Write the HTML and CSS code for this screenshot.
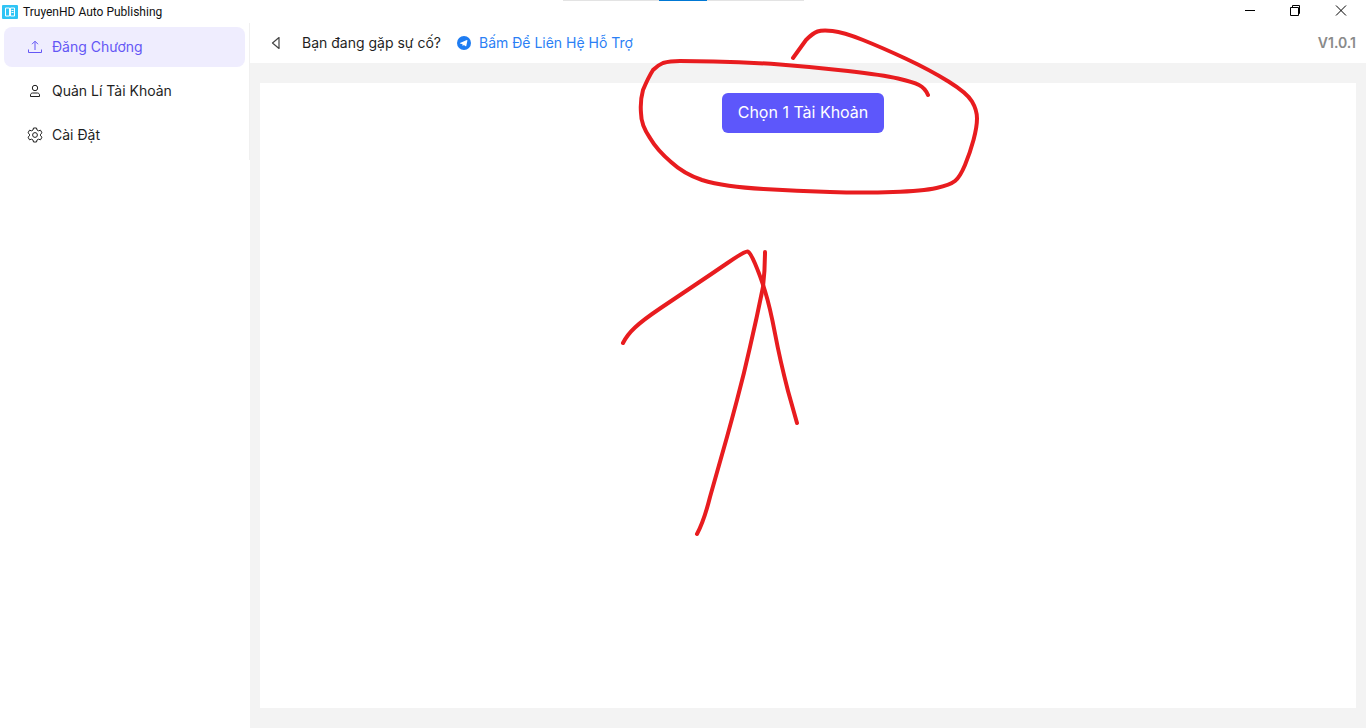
FILE: index.html
```html
<!DOCTYPE html>
<html lang="en">
<head>
    <meta charset="UTF-8">
    <title>TruyenHD Auto Publishing</title>
    <link rel="stylesheet" href="styles.css">
</head>
<body>
    <div class="title-bar">
        <div class="app-title">
            <svg class="app-logo" width="16" height="14" viewBox="0 0 16 14">
                <rect width="16" height="14" rx="1" fill="#2fc4f5"/>
                <path d="M3.500 3h4v8h-4zM8.500 3h4v8h-4z" fill="none" stroke="#fff" stroke-width="1"/>
                <path d="M9.500 5.500h2M9.500 7.500h2" stroke="#fff" stroke-width="1"/>
            </svg>
            <span>TruyenHD Auto Publishing</span>
        </div>
        <div class="window-buttons">
            <svg class="win-button" width="12" height="12" viewBox="0 0 12 12"><path d="M2 5.500h10" stroke="#000" fill="none"/></svg>
            <svg class="win-button" width="12" height="12" viewBox="0 0 12 12"><path d="M1.500 2.500h8v8h-8zM3.500 2.500v-2h7v8h-1" stroke="#000" fill="none"/></svg>
            <svg class="win-button" width="12" height="12" viewBox="0 0 12 12"><path d="M1 0.500l10 10M11 0.500l-10 10" stroke="#000" fill="none"/></svg>
        </div>
    </div>
    <div class="tab-strip"><div class="tab-strip-active"></div></div>

    <div class="app-body">
        <div class="sidebar">
            <nav class="nav-list">
                <a class="nav-item active">
                    <svg width="16" height="16" viewBox="0 0 16 16" fill="none" stroke="currentColor" stroke-width="1">
                        <path d="M8 11V2.500M5 5.200l3-3 3 3M1.500 10.500v3h13v-3"/>
                    </svg>
                    <span>Đăng Chương</span>
                </a>
                <a class="nav-item">
                    <svg width="16" height="16" viewBox="0 0 16 16" fill="none" stroke="currentColor" stroke-width="1">
                        <circle cx="8" cy="5" r="2.700"/>
                        <path d="M3.500 13.500v-1.500c0-1.100.9-2 2-2h5c1.100 0 2 .9 2 2v1.500z"/>
                    </svg>
                    <span>Quản Lí Tài Khoản</span>
                </a>
                <a class="nav-item">
                    <svg width="16" height="16" viewBox="0 0 16 16" fill="none" stroke="currentColor" stroke-width="1">
                        <circle cx="8" cy="8" r="2.400"/>
                        <path d="M6.500 1h3l.5 2 1.500.8 2-.6 1.500 2.600-1.500 1.400v1.600l1.500 1.400-1.500 2.600-2-.6-1.500.8-.5 2h-3l-.5-2-1.500-.8-2 .6L1 10.200l1.500-1.400V7.200L1 5.800l1.500-2.600 2 .6L6 3z" stroke-linejoin="round"/>
                    </svg>
                    <span>Cài Đặt</span>
                </a>
            </nav>
        </div>

        <main class="main">
            <header class="top-bar">
                <svg class="back-icon" width="12" height="12" viewBox="0 0 12 12" fill="none" stroke="#444" stroke-width="1.200">
                    <path d="M9 .5v11L2.500 6z" stroke-linejoin="round"/>
                </svg>
                <span class="help-text">Bạn đang gặp sự cố?</span>
                <a class="help-link">
                    <svg width="14" height="14" viewBox="0 0 14 14">
                        <circle cx="7" cy="7" r="7" fill="#1e7cf2"/>
                        <path d="M3 6.900l6.900-2.800c.3-.1.600.1.500.5L9.300 9.900c-.1.400-.4.400-.7.300L6.900 8.900l-.9.900c-.2.200-.4.100-.4-.1l-.1-1.500-2.400-.8c-.3-.1-.3-.4-.1-.5z" fill="#fff"/>
                    </svg>
                    <span>Bấm Để Liên Hệ Hỗ Trợ</span>
                </a>
                <span class="version">V1.0.1</span>
            </header>
            <div class="content">
                <div class="card">
                    <button class="pick-button">Chọn 1 Tài Khoản</button>
                </div>
            </div>
        </main>
    </div>

    <!-- red marker scribbles on top of the screenshot -->
    <svg class="scribble" width="1366" height="728" viewBox="0 0 1366 728" fill="none" stroke="#e81c1f" stroke-width="4" stroke-linecap="round" stroke-linejoin="round">
        <path d="M793 58L806 40Q813 33 817.500 31.500Q822 30 832.500 31Q843 32 863 40Q883 48 906.500 59Q930 70 948.500 81.500Q967 93 972 101.500Q977 110 977 118.500Q977 127 973.500 140Q970 153 965 165Q960 177 955 181Q950 185 936.500 188Q923 191 893 192Q863 193 830 192Q797 191 763.500 189Q725 187 702 180Q684 174 671 162Q657 150 650 138Q641 125 641 113Q640 101 643 90Q648 78 653 70Q658 65 663 63Q670 61 680 61L713.500 61.500Q747 62 780 64.500Q813 67 848 71Q883 75 898 78.500Q913 82 919 85Q925 88 928 95"/>
        <path d="M623 343Q627 335 635 327.500Q643 320 660 308.500Q677 297 693.500 286Q710 275 727.500 263Q745 251 747.500 251.500Q750 252 755 263.500Q760 275 765 291Q770 307 775 333.500Q780 360 788 391L797 423"/>
        <path d="M765 252Q765 270 763 287Q757 317 750 347Q744 374 737 400Q732 419 727 437L710 497Q704 521 697 534"/>
    </svg>
</body>
</html>
```

FILE: styles.css
```css
body {
    margin: 0;
    height: 728px;
    overflow: hidden;
    font-family: Inter, "Noto Sans", sans-serif;
    font-size: 14px;
    color: #1f1f1f;
    background-color: #fff;
    position: relative;
}

.title-bar {
    height: 23px;
    display: flex;
    justify-content: space-between;
}

.app-title {
    display: flex;
    align-items: center;
    gap: 5px;
    padding-left: 2px;
    font-family: Roboto, "Noto Sans", sans-serif;
    font-size: 12px;
    color: #111;
}

.window-buttons {
    display: flex;
    gap: 34px;
    padding: 5px 19px 0 0;
}

.win-button {
    display: block;
}

/* thin strip left over from the window behind */
.tab-strip {
    position: absolute;
    top: 0;
    left: 563px;
    width: 241px;
    height: 1px;
    background-color: #e3e3e3;
}

.tab-strip-active {
    width: 48px;
    height: 1px;
    margin-left: 96px;
    background-color: #0078d4;
}

.app-body {
    display: flex;
    height: 705px;
}

.sidebar {
    width: 250px;
}

.nav-list {
    height: 137px;
    box-sizing: border-box;
    padding: 4px 4px 0;
    border-right: 1px solid #f0f0f0;
    display: flex;
    flex-direction: column;
    gap: 4px;
}

.nav-item {
    height: 40px;
    box-sizing: border-box;
    padding: 0 0 2px 23px;
    display: flex;
    align-items: center;
    gap: 9px;
    border-radius: 8px;
}

.nav-item svg {
    margin-top: 2px;
}

.nav-item.active {
    background-color: #efedfe;
    color: #6457f5;
}

.main {
    flex: 1;
    display: flex;
    flex-direction: column;
}

.top-bar {
    height: 40px;
    box-sizing: border-box;
    display: flex;
    align-items: center;
    padding: 0 10px 2px 20px;
}

.top-bar svg {
    margin-top: 2px;
}

.back-icon {
    margin-right: 20px;
}

.help-text {
    margin-right: 16px;
}

.help-link {
    display: flex;
    align-items: center;
    gap: 8px;
    color: #2b7ff5;
}

.version {
    margin-left: auto;
    font-weight: 600;
    color: #8a8a8a;
}

.content {
    flex: 1;
    background-color: #f3f3f3;
    padding: 20px 10px;
    display: flex;
}

.card {
    flex: 1;
    background-color: #fff;
    display: flex;
    justify-content: center;
    align-items: flex-start;
    padding-top: 10px;
}

.pick-button {
    height: 40px;
    padding: 0 16px 2px;
    margin-right: 10px;
    font-family: inherit;
    font-size: 16px;
    font-weight: 400;
    color: #fff;
    background-color: #5d57fb;
    border: none;
    border-radius: 6px;
}

.scribble {
    position: absolute;
    top: 0;
    left: 0;
    pointer-events: none;
}
```
